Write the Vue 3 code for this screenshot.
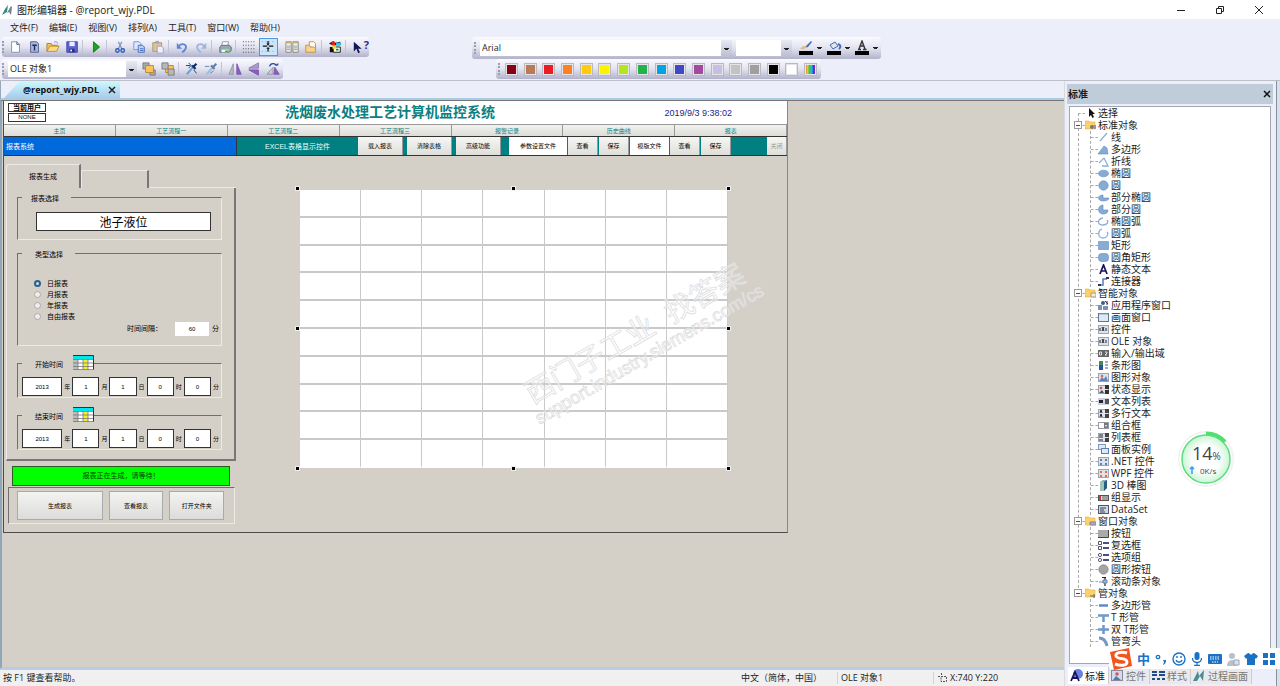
<script setup>
import { ref } from 'vue'

const g = {
  page: '<path d="M4 2h6l3 3v9H4z" fill="#fff" stroke="#7d8cb0"/><path d="M10 2v3h3" fill="none" stroke="#44507a"/>',
  text: '<path d="M4 2h7l2 2v10H4z" fill="#aab6dc" stroke="#4c5a86"/><path d="M6 6h5M8.5 6v6" stroke="#1d2b60" stroke-width="1.6"/>',
  open: '<path d="M1 13V4h5l1 2h6v2" fill="#f3c35e" stroke="#a97a20"/><path d="M1 13l3-6h11l-3 6z" fill="#fbd98a" stroke="#b88a2c"/><path d="M9 3c2-2 4-1 4 1" stroke="#6c86c8" fill="none"/>',
  save: '<path d="M2 2h12v12H2z" fill="#5d62d6" stroke="#3b3f9e"/><path d="M5 2h6v5H5z" fill="#e9edff"/><path d="M5 10h6v4H5z" fill="#2a2e78"/><path d="M6 11h2v2H6z" fill="#fff"/>',
  play: '<path d="M5 2l7 6-7 6z" fill="#1ba51f" stroke="#0d7a13"/>',
  cut: '<path d="M6 2l4 8M10 2L6 10" stroke="#7f93b8" stroke-width="1.4"/><circle cx="5" cy="12" r="2" fill="none" stroke="#2b58b4" stroke-width="1.5"/><circle cx="11" cy="12" r="2" fill="none" stroke="#2b58b4" stroke-width="1.5"/>',
  copy: '<path d="M2 2h6l2 2v7H2z" fill="#dfe8ff" stroke="#6d8fd0"/><path d="M7 6h5l2 2v6H7z" fill="#b8d0fa" stroke="#3d69b8"/><path d="M9 10h4M9 12h4" stroke="#3d69b8"/>',
  paste: '<path d="M2 3h10v10H2z" fill="#dcc593" stroke="#a8956a"/><path d="M5 1h4v3H5z" fill="#a8a8b0"/><path d="M7 7h5l2 2v6H7z" fill="#eef" stroke="#9aa0b8"/>',
  undo: '<path d="M4 7c5-5 10-1 8 3-1 2-2 3-4 4" fill="none" stroke="#5a86dc" stroke-width="2"/><path d="M2 3v7h6z" fill="#5a86dc"/>',
  redo: '<path d="M12 7c-5-5-10-1-8 3 1 2 2 3 4 4" fill="none" stroke="#9db4dc" stroke-width="2"/><path d="M14 3v7H8z" fill="#9db4dc"/>',
  print: '<path d="M5 2h7l-1 5H4z" fill="#fff" stroke="#8a93a0"/><path d="M2 8l2-2h9l2 2v4l-2 2H2z" fill="#9aa7b0" stroke="#5d6b74"/><path d="M4 11h8v3H4z" fill="#dfe"/><path d="M8 13h4" stroke="#2c2" stroke-width="2"/>',
  grid: '<path d="M1 2h15M1 6h15M1 10h15M1 14h15" stroke="#333" stroke-dasharray="1 2"/>',
  snap: '<path d="M1 2h15M1 13h15" stroke="#7b98b8" stroke-dasharray="1 3"/><path d="M8 1v5M8 9v4M2 7h5M9 7h5" stroke="#111" stroke-width="1.4"/><path d="M6 4h4l-2 2zM6 10h4L8 8z" fill="#111"/>',
  props: '<path d="M1 2h6v12H1zM9 2h6v12H9z" fill="#f8f4e4" stroke="#7f7f78"/><path d="M1 3h14" stroke="#c4b680" stroke-width="2"/><path d="M2 7h4M2 9h4M2 11h4M10 7h4M10 9h4M10 11h4" stroke="#8a98a8"/>',
  lib: '<path d="M2 14V6h4l1 2h6v6z" fill="#fbd489" stroke="#c08a3a"/><path d="M6 6V2h5l2 2v4" fill="#fff" stroke="#c08a3a"/>',
  dyn: '<path d="M1 4l5-3 2 2 6-1v4H5z" fill="#1a1a1a"/><path d="M4 2h4v4H4z" fill="#e02020"/><path d="M9 3h6v3H9z" fill="#28c8e8"/><path d="M2 8h4v6H2z" fill="#111"/><path d="M6 8h8v6H6z" fill="#ffe" stroke="#111"/><path d="M5 7h4v3H5z" fill="#f0e020"/><path d="M9 11h3" stroke="#1a8a30" stroke-width="2"/>',
  help: '<path d="M2 2v11l3-3 2 5 2-1-2-4h4z" fill="#14145a"/>',
  front: '<path d="M1 1h7v7H1z" fill="#aaa" stroke="#777"/><path d="M9 9h6v6H9z" fill="#aaa" stroke="#777"/><path d="M4 4h9v8H4z" fill="#fbc45a" stroke="#b8832a"/>',
  back: '<path d="M5 4h9v8H5z" fill="#fbc45a" stroke="#b8832a"/><path d="M1 1h7v7H1z" fill="#b8b8b8" stroke="#777"/><path d="M8 8h7v7H8z" fill="#b8b8b8" stroke="#777"/>',
  pick: '<path d="M2 14l7-8" stroke="#6aa8d8" stroke-width="2.4"/><path d="M8 4l4 4M9 6l4-4" stroke="#10306c" stroke-width="2.6"/><path d="M1 4h5M4 1l3 3-3 3M10 9l3 4" stroke="#10306c" fill="none"/>',
  pick2: '<path d="M3 14l7-8" stroke="#9cc0e0" stroke-width="2.4"/><path d="M8 4l4 4M10 6l4-4" stroke="#5f7da8" stroke-width="2.4"/><path d="M1 5h5M7 13l4-3" stroke="#5f7da8"/>',
  mirh: '<path d="M6 2v12H1z" fill="#b4b9c4" stroke="#8d94a4"/><path d="M10 2v12h5z" fill="#8a5cc0" stroke="#7a56b0"/>',
  mirv: '<path d="M13 1v6H2z" fill="#a9a0c8" stroke="#8779af"/><path d="M13 15V9H2z" fill="#8a5cc0" stroke="#7a56b0"/>',
  rot: '<path d="M1 14h7V6z" fill="#c4c9d4" stroke="#8d94a4"/><path d="M9 14h6L10 6z" fill="#8a5cc0" stroke="#7a56b0"/><path d="M4 5c1-4 6-4 8-1" fill="none" stroke="#2848a0" stroke-width="1.5"/><path d="M10 4h4V1z" fill="#2848a0"/>'
}
const bar1 = ['page', 'text', 'open', 'save', '|', 'play', '|', 'cut', 'copy', 'paste', '|', 'undo', 'redo', '|', 'print', '|', 'grid', 'snap', '-', 'props', 'lib', '|', 'dyn', '|', 'help']
const bar2 = ['front', 'back', '|', 'pick', 'pick2', '|', 'mirh', 'mirv', 'rot']
const names = { page: '新建', text: '模板', open: '打开', save: '保存', play: '运行', cut: '剪切', copy: '复制', paste: '粘贴', undo: '撤消', redo: '重做', print: '打印', grid: '网格', snap: '对齐网格', props: '属性', lib: '库', dyn: '动态向导', help: '帮助', front: '置前', back: '置后', pick: '复制属性', pick2: '分配属性', mirh: '水平镜像', mirv: '垂直镜像', rot: '旋转' }
const menus = ['文件(F)', '编辑(E)', '视图(V)', '排列(A)', '工具(T)', '窗口(W)', '帮助(H)']
const swatches = ['#880015', '#b97a57', '#ed1c24', '#ff7f27', '#ffc90e', '#fff200', '#b5e61d', '#22b14c', '#00a2e8', '#3f48cc', '#a349a4', '#c8bfe7', '#c3c3c3', '#9f9f9f', '#000000', '#ffffff']

const blue = 'fill="#86acd6" stroke="#5f8bbd" stroke-width=".6"'
const line = 'fill="none" stroke="#8fb0da" stroke-width="1.3"'
const small = (c) => `<rect x=".5" y="1.5" width="10" height="8" fill="#dde3ea" stroke="#9aa4b4"/>${c}`
const t = {
  line: `<path d="M2 9l7-8" ${line}/>`,
  poly: `<path d="M0 10l6-8 3 2 1 6z" ${blue}/>`,
  pline: `<path d="M1 7l5-5 4 8H4" ${line}/>`,
  ell: `<ellipse cx="5.5" cy="5.5" rx="5" ry="3.3" ${blue}/>`,
  circ: `<circle cx="5.5" cy="5.5" r="4.7" ${blue}/>`,
  pell: `<path d="M5 6V3C-1 3-1 9 5 9c3 0 6-1 6-3z" ${blue}/>`,
  pcirc: `<path d="M5 6V1C-1 1-1 10 5 10c3 0 5-1 5-4z" ${blue}/>`,
  aell: `<path d="M5 2C-1 3-1 9 5 9c4 0 6-3 4-5" ${line}/>`,
  acirc: `<path d="M4 1C-1 3 0 10 5 10c4 0 6-4 4-6" ${line}/>`,
  rect: `<path d="M.5 1.500h10v8H.5z" ${blue}/>`,
  rrect: `<rect x=".5" y="1.500" width="10" height="8" rx="3" ${blue}/>`,
  A: '<path d="M2 10l3.500-9L9 10M3.500 7h4" fill="none" stroke="#14145a" stroke-width="1.7"/>',
  conn: '<path d="M2 9h3V3h4" fill="none" stroke="#4f7fc0" stroke-width="1.500"/><path d="M0 8h3v2H0zM8 1h3v2H8z" fill="#335"/>',
  app: '<path d="M0 5h4v5H0zM5 6h5v4H5z" fill="#7b93b4"/><circle cx="5" cy="3" r="2" fill="#3b5f8e"/><path d="M7 1l3 3M9 1v4" stroke="#335"/>',
  win: '<rect x=".5" y="1.500" width="10" height="8" fill="#dfe9f3" stroke="#5f7890"/><path d="M1 2h9" stroke="#8aa8c8"/>',
  ctl: small('<path d="M2 4v3M4 3l2 4M6 3L4 7M8 4v3" stroke="#222"/>'),
  io: '<rect y="2" width="11" height="7" fill="#666"/><path d="M1.500 4h2v3h-2zM7 4h2v1L7 7h2" fill="none" stroke="#fff" stroke-width=".8"/>',
  bars: '<path d="M1 1h4v9H1z" fill="#3d8b57"/><path d="M1 5h4v5H1z" fill="#2d4f9a"/><path d="M7 2h3M7 5h3M7 8h3" stroke="#557"/>',
  gfx: small('<path d="M1 9l3-4 2 2 2-3 2 5z" fill="#5b86b8"/><circle cx="4" cy="4" r="1.300" fill="#e06050"/>'),
  state: small('<path d="M7 1h4v4H7zM7 6h4v4H7z" fill="#333"/><circle cx="3" cy="4" r="1.300" fill="#e05030"/><path d="M1 9l3-3 2 3z" fill="#456"/>'),
  tlist: '<rect y="2" width="11" height="7" fill="#ccd3dd"/><path d="M1 4h4v3H1z" fill="#223"/><path d="M7 3h4v5H7z" fill="#555"/>',
  mtext: small('<path d="M2 5l1-3 1 3M2 9l1-3 1 3" stroke="#222" fill="none"/><path d="M7 1h4v4H7zM7 6h4v4H7z" fill="#444"/>'),
  combo: '<rect x=".5" y="2.500" width="10" height="6" fill="#fff" stroke="#99a"/><path d="M6 3h4v5H6z" fill="#777"/><path d="M7 5h2l-1 2z" fill="#fff"/>',
  lbox: small('<path d="M1 3h4M1 5h4M1 8h4" stroke="#223"/><path d="M7 1h4v4H7zM7 6h4v4H7z" fill="#444"/>'),
  face: '<rect x=".5" y=".5" width="7" height="5" fill="#dfe9f6" stroke="#7a9cc4"/><rect x="3.500" y="4.500" width="7" height="5" fill="#dfe9f6" stroke="#5a80b0"/>',
  net: small('<path d="M2 3h2v2H2zM7 3h2v2H7zM2 7h2v2H2zM7 7h2v2H7z" fill="#5f7fb0"/>'),
  wpf: small('<path d="M2 3h2v2H2zM7 3h2v2H7zM2 7h2v2H2zM7 7h2v2H7z" fill="#e07040"/>'),
  cyl: '<path d="M2 2l3-2h4v8l-3 3H2z" fill="#88aacc"/><path d="M2 2h4v9H2z" fill="#9fc4b8"/><path d="M6 2l3-2v8l-3 3z" fill="#2c5c80"/>',
  grp: '<rect x=".5" y="3.500" width="10" height="5" fill="#eee" stroke="#555"/><path d="M1 4h2v4H1z" fill="#d33"/><path d="M5 4v4M7 4v4M9 4v4" stroke="#555"/>',
  data: '<rect x=".5" y="1.500" width="10" height="8" fill="#cdd8e2" stroke="#557"/><path d="M2 4h6M2 6h4M2 8h5" stroke="#345"/>',
  btn: '<path d="M0 2h10v7H0z" fill="#aaa"/><path d="M0 9.500h10.500V2" fill="none" stroke="#444"/>',
  chk: '<path d="M.5 1.500h3v3h-3zM.5 6.500h3v3h-3z" fill="#fff" stroke="#557"/><path d="M5 3h6M5 8h6" stroke="#14145a" stroke-width="1.500"/>',
  opt: '<circle cx="2" cy="3" r="1.600" fill="#fff" stroke="#557"/><circle cx="2" cy="8" r="1.600" fill="#fff" stroke="#557"/><path d="M5 3h6M5 8h6" stroke="#14145a" stroke-width="1.500"/>',
  rbtn: '<circle cx="5.500" cy="5.500" r="4.700" fill="#a4a4a4" stroke="#777" stroke-width=".6"/>',
  sld: '<path d="M7 1v9M4 1.500h4" stroke="#222" stroke-width="1.200"/><path d="M1 6h5M5 4h4v3H5z" stroke="#68a" fill="#9bc"/>',
  pipe: '<path d="M1 5.500h9" stroke="#5f8bc4" stroke-width="2.500"/>',
  tee: '<path d="M0 3.500h11M5.500 4v6" stroke="#7297c8" stroke-width="2.500"/>',
  cross: '<path d="M0 5.500h11M5.500 1v9" stroke="#7297c8" stroke-width="2.500"/>',
  elbow: '<path d="M1 2c4 0 7 3 8 8" fill="none" stroke="#7297c8" stroke-width="3"/>'
}
const groups = [
  { name: '标准对象', mark: '<circle cx="7" cy="7" r="2" fill="#777"/><path d="M8 5h3v4H9z" fill="#999"/>', kids: [['line', '线'], ['poly', '多边形'], ['pline', '折线'], ['ell', '椭圆'], ['circ', '圆'], ['pell', '部分椭圆'], ['pcirc', '部分圆'], ['aell', '椭圆弧'], ['acirc', '圆弧'], ['rect', '矩形'], ['rrect', '圆角矩形'], ['A', '静态文本'], ['conn', '连接器']] },
  { name: '智能对象', mark: '<path d="M6 5h5v4H6z" fill="#eee" stroke="#a98"/>', kids: [['app', '应用程序窗口'], ['win', '画面窗口'], ['ctl', '控件'], ['ctl', 'OLE 对象'], ['io', '输入/输出域'], ['bars', '条形图'], ['gfx', '图形对象'], ['state', '状态显示'], ['tlist', '文本列表'], ['mtext', '多行文本'], ['combo', '组合框'], ['lbox', '列表框'], ['face', '面板实例'], ['net', '.NET 控件'], ['wpf', 'WPF 控件'], ['cyl', '3D 棒图'], ['grp', '组显示'], ['data', 'DataSet']] },
  { name: '窗口对象', mark: '<path d="M5 6h6v3H5z" fill="#aab" stroke="#889"/>', kids: [['btn', '按钮'], ['chk', '复选框'], ['opt', '选项组'], ['rbtn', '圆形按钮'], ['sld', '滚动条对象']] },
  { name: '管对象', mark: '<path d="M5 8h5M9 6v4" stroke="#667"/>', kids: [['pipe', '多边形管'], ['tee', 'T 形管'], ['cross', '双 T形管'], ['elbow', '管弯头']] }
]
const folder = '<path d="M0 9V1h4l1 1h5v7z" fill="#fbd26a" stroke="#e0b04a" stroke-width=".6"/>'

const nav = ['主页', '工艺流程一', '工艺流程二', '工艺流程三', '报警记录', '历史曲线', '报表']
const kinds = ['日报表', '月报表', '年报表', '自由报表']
const kind = ref('日报表')
const periods = [
  { id: 'start', name: '开始时间' },
  { id: 'end', name: '结束时间' }
]
const parts = [['2013', '年'], ['1', '月'], ['1', '日'], ['0', '时'], ['0', '分']]
const handles = ['nw', 'n', 'ne', 'w', 'e', 'sw', 's', 'se']
const paneTabs = [
  ['标准', '<circle cx="8" cy="5" r="5" fill="#6b7fe0"/><path d="M1 12L5 3l4 9M2 9h5" fill="none" stroke="#14145a" stroke-width="1.800"/>'],
  ['控件', '<rect x=".5" y="1.500" width="11" height="10" fill="#cfdcf0" stroke="#889"/><circle cx="6" cy="5" r="1.800" fill="#d55"/><path d="M2 11l3-4 5 4z" fill="#57a"/>'],
  ['样式', '<path d="M0 3h5M7 3h6M0 6h5M7 6h6M0 10h3M5 10h3M10 10h3" stroke="#224a86" stroke-width="1.800"/>'],
  ['过程画面', '<path d="M0 12L5 2l1 5 5-6-1 11-3-5-3 5z" fill="#4a8a90"/>']
]
</script>

<template>
  <div class="app">
    <header class="title">
      <svg class="logo" viewBox="0 0 12 12"><path d="M1 11L4 5l3-4-1 7z" fill="#2f8a8a" /><path d="M6 9l4-7 1 1-1 8-2-3z" fill="#73828c" /></svg>
      <h1>图形编辑器 - @report_wjy.PDL</h1>
      <div class="winbtns">
        <button aria-label="最小化"><svg viewBox="0 0 10 10"><path d="M1 5.500h8" /></svg></button>
        <button aria-label="还原"><svg viewBox="0 0 10 10"><path d="M1.500 3.500h5v5h-5zM3.500 3V1.500h5v5H7" /></svg></button>
        <button aria-label="关闭"><svg viewBox="0 0 10 10"><path d="M1 1l8 8M9 1L1 9" /></svg></button>
      </div>
    </header>
    <nav class="menu"><button v-for="m in menus" :key="m">{{ m }}</button></nav>

    <div class="bars">
      <div class="left-bars">
        <div class="bar">
          <i class="grip"></i>
          <template v-for="(b, i) in bar1" :key="i">
            <i v-if="b === '|' || b === '-'" class="sep" :class="{ blank: b === '-' }"></i>
            <button v-else class="tool" :class="{ on: b === 'snap' }" :aria-label="names[b]">
              <svg viewBox="0 0 17 16" v-html="g[b]"></svg><b v-if="b === 'help'" class="q">?</b>
            </button>
          </template>
        </div>
        <div class="bar">
          <i class="grip"></i>
          <select class="objects" aria-label="对象"><option>OLE 对象1</option></select>
          <template v-for="(b, i) in bar2" :key="i">
            <i v-if="b === '|'" class="sep"></i>
            <button v-else class="tool" :aria-label="names[b]"><svg viewBox="0 0 17 16" v-html="g[b]"></svg></button>
          </template>
        </div>
      </div>
      <div class="right-bars">
        <div class="bar fontbar">
          <i class="grip"></i>
          <select class="font" aria-label="字体"><option>Arial</option></select>
          <select class="size" aria-label="字号"><option></option></select>
          <button class="ink" aria-label="线条颜色"><svg viewBox="0 0 16 16"><path d="M3 9l7-2 4-5-1-1-5 5z" fill="#3f6cc0" /><path d="M2 9c2-3 4-3 6-3l1 2z" fill="#f0b860" /><path d="M1 11h14v4H1z" /></svg></button>
          <button class="ink" aria-label="填充颜色"><svg viewBox="0 0 16 16"><path d="M4 5l5-3 3 4-5 3z" fill="#dce6f6" stroke="#456aa8" /><path d="M12 4c3 1 3 3 1 5" fill="none" stroke="#3f6cc0" stroke-width="2" /><path d="M1 11h14v4H1z" /></svg></button>
          <button class="ink" aria-label="字体颜色"><svg viewBox="0 0 16 16"><path d="M4 9.500h3M9 9.500h3.500M5 9l3-8 3 8M6 6h4" fill="none" stroke="#333" stroke-width="1.400" /><path d="M1 11h14v4H1z" /></svg></button>
        </div>
        <div class="bar palette">
          <i class="grip"></i>
          <div class="swatches">
            <button v-for="c in swatches" :key="c" :aria-label="c" :style="{ background: c }"></button>
            <button class="rainbow" aria-label="其他颜色"></button>
          </div>
        </div>
      </div>
    </div>

    <div class="main">
      <div class="editor">
        <div class="tabs">
          <div class="doctab"><span>@report_wjy.PDL</span>
            <button aria-label="关闭文档"><svg viewBox="0 0 8 8"><path d="M1 1l6 6M7 1L1 7" stroke="#222" stroke-width="1.500" /></svg></button>
          </div>
        </div>
        <main class="work">
          <section class="page">
            <header class="phead">
              <div class="user"><span>当前用户</span><span>NONE</span></div>
              <h2>洗烟废水处理工艺计算机监控系统</h2>
              <time>2019/9/3 9:38:02</time>
            </header>
            <nav class="pnav"><button v-for="n in nav" :key="n">{{ n }}</button></nav>
            <div class="strip">
              <div class="sys">报表系统</div>
              <div class="excel">EXCEL表格显示控件</div>
              <div class="acts">
                <button>载入报表</button><button>清除表格</button><button>高级功能</button>
              </div>
              <div class="files">
                <span class="wide">参数设置文件</span><button>查看</button><button>保存</button>
                <span>模版文件</span><button>查看</button><button>保存</button>
              </div>
              <button class="off">关闭</button>
            </div>

            <div class="pbody">
              <form class="side" @submit.prevent>
                <div class="cardtabs"><button>报表生成</button><button aria-label="空白页"></button><i></i></div>
                <div class="card">
                  <fieldset class="pick">
                    <legend>报表选择</legend>
                    <input aria-label="报表选择" value="池子液位" />
                  </fieldset>
                  <fieldset class="kind">
                    <legend>类型选择</legend>
                    <label v-for="k in kinds" :key="k"><input v-model="kind" type="radio" name="kind" :value="k" />{{ k }}</label>
                    <div class="every"><label for="every">时间间隔：</label><input id="every" value="60" /><span>分</span></div>
                  </fieldset>
                  <fieldset v-for="p in periods" :key="p.id" class="when">
                    <legend>{{ p.name }}
                      <svg viewBox="0 0 21 15"><rect width="21" height="15" fill="#fff" /><path d="M0 4h5v11H0z" fill="#bbb" /><path d="M10 5h5v10h-5z" fill="#f2ee30" /><path d="M0 1h20v3H0z" fill="#00e4ec" /><path d="M0 .5h20.500v14H0M0 4.500h20M0 8h20M0 11.500h20M5 4v11M10 4v11M15 4v11" fill="none" stroke="#777" stroke-width=".8" /><path d="M0 .5h20.500v14" fill="none" stroke="#333" /></svg>
                    </legend>
                    <div class="date">
                      <template v-for="(d, i) in parts" :key="i"><input :id="p.id + i" :value="d[0]" /><label :for="p.id + i">{{ d[1] }}</label></template>
                    </div>
                  </fieldset>
                </div>
                <p class="wait">报表正在生成，请等待！</p>
                <div class="cmds"><button>生成报表</button><button>查看报表</button><button>打开文件夹</button></div>
              </form>
              <div class="sheet">
                <table aria-label="报表"><tbody><tr v-for="r in 10" :key="r"><td v-for="c in 7" :key="c"></td></tr></tbody></table>
                <i v-for="h in handles" :key="h" class="handle" :class="h"></i>
                <svg class="mark" viewBox="0 0 280 190">
                  <g transform="translate(46 151) rotate(-30)"><text x="-14" y="-11" font-size="29">西门子工业&#160;&#160;找答案</text><text x="-18" y="10" font-size="18">support.industry.siemens.com/cs</text></g>
                </svg>
              </div>
            </div>
          </section>
        </main>
        <footer class="status">
          <span class="hint">按 F1 键查看帮助。</span><span class="lang">中文（简体，中国）</span><span class="obj">OLE 对象1</span>
          <span class="pos"><svg viewBox="0 0 10 10"><path d="M3 3.500h5.500v5H3zM0 3.500h3M3.500 0v3" fill="none" stroke="#555" stroke-dasharray="2 1" /></svg>X:740 Y:220</span>
        </footer>
      </div>

      <aside class="pane">
        <header><h3>标准</h3><button aria-label="关闭面板"><svg viewBox="0 0 8 8"><path d="M1 1l6 6M7 1L1 7" stroke="#111" stroke-width="1.500" /></svg></button></header>
        <div class="treebox">
          <ul class="tree">
            <li><div class="row"><svg viewBox="0 0 11 11"><path d="M4 0v9l2-2 1.500 3 1.500-1-1.500-3H10z" fill="#111" /></svg>选择</div></li>
            <li v-for="n in groups" :key="n.name">
              <div class="row"><button class="box" :aria-label="'折叠' + n.name"></button><svg viewBox="0 0 11 11" v-html="folder + n.mark"></svg>{{ n.name }}</div>
              <ul><li v-for="k in n.kids" :key="k[1]" class="row"><svg viewBox="0 0 11 11" v-html="t[k[0]]"></svg>{{ k[1] }}</li></ul>
            </li>
          </ul>
        </div>
        <div class="panetabs">
          <button v-for="(p, i) in paneTabs" :key="p[0]" :class="{ cur: i === 0 }"><svg viewBox="0 0 13 13" v-html="p[1]"></svg>{{ p[0] }}</button>
        </div>
      </aside>
    </div>

    <div class="gauge">
      <svg viewBox="0 0 58 58"><defs><radialGradient id="glow"><stop offset=".55" stop-color="#fff" /><stop offset="1" stop-color="#c9f5d4" /></radialGradient></defs>
        <circle cx="29" cy="29" r="28" fill="#e4e4e4" opacity=".5" /><circle cx="29" cy="29" r="26.500" fill="#fff" />
        <circle cx="29" cy="29" r="24" fill="url(#glow)" stroke="#5fdc80" stroke-width="1.500" />
        <path d="M29 3.500A25.500 25.500 0 0 1 48 12" fill="none" stroke="#4fe070" stroke-width="4" />
        <path d="M15 37v7M13 39l2-2 2 2" fill="none" stroke="#3a9bf0" stroke-width="1.500" />
      </svg>
      <span class="pct">14<small>%</small></span><span class="rate">0K/s</span>
    </div>

    <div class="ime">
      <svg class="sogou" viewBox="0 0 24 22"><path d="M1 4L20 0l3 18-18 4z" fill="#f2541b" /><path d="M18 5C12 3 6 5 7 8c1 4 11 1 11 6 0 4-7 4-12 2" fill="none" stroke="#fff" stroke-width="3" /></svg>
      <b>中</b>
      <svg viewBox="0 0 14 14"><circle cx="4" cy="5" r="1.700" fill="none" stroke="#1b72c4" stroke-width="1.300" /><path d="M9 8h3c0 3-1 4-3 5l1-3z" fill="#1b72c4" /></svg>
      <svg viewBox="0 0 14 14"><circle cx="7" cy="7" r="6" fill="none" stroke="#1b72c4" stroke-width="1.400" /><path d="M4 8c1 3 5 3 6 0M5 4v2M9 4v2" fill="none" stroke="#1b72c4" stroke-width="1.400" /></svg>
      <svg viewBox="0 0 14 14"><rect x="4.500" y="0" width="5" height="8" rx="2.500" fill="#1b72c4" /><path d="M2.500 6c0 6 9 6 9 0M7 10v3M4 13.500h6" fill="none" stroke="#1b72c4" stroke-width="1.300" /></svg>
      <svg viewBox="0 0 14 14"><rect y="2" width="14" height="10" rx="1" fill="#1b72c4" /><path d="M2 5h10M2 7h10M4 10h6" stroke="#fff" stroke-dasharray="1.500 1" /></svg>
      <svg viewBox="0 0 14 14"><circle cx="6" cy="4" r="3" fill="#b8c0cc" /><path d="M1 14c0-8 10-8 10 0z" fill="#b8c0cc" /><path d="M8 8h5v5H8z" fill="#dde2ea" stroke="#9aa6b4" /></svg>
      <svg viewBox="0 0 14 14"><path d="M4 1h1c1 2 3 2 4 0h1l4 3-2 3-1-1v7H3V6L2 7 0 4z" fill="#1b72c4" /></svg>
      <svg viewBox="0 0 14 14"><path d="M1 1h5v5H1zM8 1h5v5H8zM1 8h5v5H1zM8 8h5v5H8z" fill="#1b72c4" /></svg>
    </div>
  </div>
</template>

<style>
html, body { margin: 0; background: #eceffa; }
</style>
<style scoped>
.app { min-height: 100vh; display: flex; flex-direction: column; position: relative; overflow: hidden; font: 9px/12px "Open Sans", "Noto Sans CJK SC", sans-serif; color: #1c1c1c; background: #eceffa; }
.app * { box-sizing: border-box; }
button, input, select { font: inherit; color: inherit; border: 0; margin: 0; padding: 0; background: none; border-radius: 0; outline: 0; }
select { appearance: none; }
h1, h2, h3, p, ul { margin: 0; padding: 0; font-size: inherit; font-weight: inherit; list-style: none; }
svg { display: block; flex: none; }
input { min-width: 0; }

.title { height: 19px; display: flex; align-items: center; gap: 4px; padding-left: 1px; background: #fff; }
.title h1 { flex: 1; font-size: 10px; color: #222; }
.logo { width: 12px; height: 12px; }
.winbtns { display: flex; padding-right: 2px; }
.winbtns button { width: 39px; height: 19px; display: grid; place-items: center; }
.winbtns svg { width: 10px; height: 10px; fill: none; stroke: #222; }
.menu { height: 18px; display: flex; gap: 11px; padding-left: 10px; align-items: center; }
.menu button { white-space: nowrap; }

.bars { display: flex; height: 44px; border-bottom: 1px solid #bcbec8; }
.left-bars { width: 470px; padding-left: 2px; }
.bar { width: fit-content; height: 20px; display: flex; align-items: center; border-radius: 3px; background: linear-gradient(#fafaff, #e2e3ef 50%, #b2b3cb); }
.left-bars .bar { margin-bottom: 2px; }
.grip { width: 4px; height: 12px; border-left: 2px dotted #9a9cb2; }
.tool { width: 19px; height: 18px; display: flex; align-items: center; justify-content: center; position: relative; }
.tool svg { width: 15px; height: 14px; }
.tool.on { background: #cbe6fb; border: 1px solid #4a9be0; }
.q { position: absolute; right: 0; top: 1px; color: #22309c; font-size: 11px; }
.sep { width: 5px; height: 14px; border-left: 1px solid #c2c3d6; }
.sep.blank { border: 0; }
.objects, .font, .size { height: 16px; padding: 0 2px; background: linear-gradient(#222, #222) calc(100% - 3px) 8px / 5px 1px no-repeat, linear-gradient(#222, #222) calc(100% - 4px) 9px / 3px 1px no-repeat, linear-gradient(#e8e9f3, #bdbed3) 100% 0 / 11px 100% no-repeat, #fff; }
.objects { width: 129px; margin: 0 3px 0 2px; }
.right-bars { padding-left: 2px; }
.fontbar { height: 22px; padding-left: 2px; }
.font { width: 252px; margin: 0 4px 0 2px; }
.size { width: 56px; margin-right: 5px; }
.ink { width: 28px; height: 18px; padding-left: 1px; background: linear-gradient(#222, #222) 20px 8px / 5px 1px no-repeat, linear-gradient(#222, #222) 21px 9px / 3px 1px no-repeat; }
.ink svg { width: 16px; height: 16px; }
.palette { margin: 0 0 0 24px; width: 325px; padding-left: 2px; }
.swatches { flex: 1; display: flex; justify-content: space-between; padding: 0 4px 0 3px; }
.swatches button { width: 13px; height: 13px; border: 1px solid #b9b9c2; box-shadow: inset 0 0 0 1px #e5e5e5; }
.swatches .rainbow { background: linear-gradient(90deg, #e33, #ec3, #3c4, #2bd, #33d, #c3c); }

.main { flex: 1; display: flex; }
.editor { flex: 1; min-width: 0; display: flex; flex-direction: column; }
.tabs { height: 19px; padding-left: 3px; border-bottom: 2px solid #a9cbe4; border-left: 1px solid #93a9ba; display: flex; }
.doctab { height: 17px; display: flex; align-items: center; gap: 9px; padding: 1px 4px 0 19px; font-weight: 700; color: #111; background: linear-gradient(#cdf9fd, #a8cbec); clip-path: polygon(16px 0, 100% 0, 100% 100%, 0 100%); }
.doctab button, .pane header button { width: 8px; height: 8px; }
.work { flex: 1; background: #d4d0c8; border: solid #8ea7bb; border-width: 1px 0 0 2px; border-top-color: #777; border-bottom: 2px solid #b4cde2; padding-left: 1px; }
.page { width: 74%; min-height: 430px; display: flex; flex-direction: column; border: 1px solid #4c4c4c; border-top: 0; border-right-color: #888; font-size: 6px; line-height: 8px; color: #000; font-family: "Liberation Sans", "Noto Sans CJK SC", sans-serif; }
.phead { height: 23px; background: #fff; display: grid; grid-template-columns: 1fr auto 1fr; align-items: center; padding: 0 15px 0 4px; }
.phead h2 { color: #0b8080; font: 700 14px/18px "Liberation Serif", "Noto Sans CJK SC", serif; }
.phead time { justify-self: end; margin-right: 40px; color: #1c1c8c; font-size: 9px; }
.user { width: 38px; display: grid; gap: 1px; text-align: center; }
.user span { border: 1px solid #333; height: 9px; line-height: 7px; }
.user span:first-child { font-weight: 700; font-size: 7px; }
.pnav { height: 12px; display: flex; color: #128080; }
.pnav button { flex: 1; border: 1px solid #999; border-width: 1px 1px 0 0; background: linear-gradient(#f2f2ef, #dcdcd8); }
.strip { height: 20px; display: flex; background: #008080; border: 1px solid #333; border-width: 1px 0; }
.sys { width: 233px; background: #006adc; color: #fff; line-height: 19px; font-size: 7px; padding-left: 2px; border-right: 1px solid #334; }
.excel { width: 121px; color: #e8ffff; text-align: center; line-height: 19px; font-size: 7px; }
.acts, .files { display: flex; gap: 4px; }
.acts button { width: 45px; }
.files { flex: 1; gap: 1px; padding-left: 8px; }
.strip button { background: linear-gradient(#f6f6f4, #dededb); border: solid #999; border-width: 0 1px 0 0; }
.files button { width: 30px; }
.files span { width: 39px; background: #fff; text-align: center; line-height: 18px; white-space: nowrap; }
.files .wide { width: 58px; }
.strip .off { width: 20px; color: #999; }

.pbody { display: flex; }
.side { width: 232px; padding: 8px 0 0 2px; }
.cardtabs { display: flex; align-items: flex-end; }
.cardtabs button { border: solid #eceae4; border-width: 1px 2px 0 1px; border-right-color: #777; }
.cardtabs button:first-child { width: 75px; height: 24px; border-radius: 3px 0 0; font-size: 7px; }
.cardtabs button:nth-child(2) { width: 68px; height: 18px; }
.cardtabs i { flex: 1; height: 1px; background: #eceae4; }
.card { height: 273px; padding: 1px 12px 0 10px; border: solid #777; border-width: 0 2px 2px 1px; border-left-color: #eceae4; }
fieldset { margin: 0; min-width: 0; padding: 0; border: 1px solid; border-color: #6f6f6f #eceae4 #eceae4 #6f6f6f; }
legend { margin-left: 4px; padding: 0 12px 0 9px; height: 16px; line-height: 20px; font-size: 7px; display: flex; }
.pick { height: 51px; }
.pick input { display: block; width: 175px; height: 19px; margin: 7px 0 0 18px; border: 1px solid #333; background: #fff; text-align: center; font-size: 12px; }
.kind { height: 101px; margin-top: 5px; }
.kind legend, .when legend { padding-left: 13px; }
.kind > label { display: flex; align-items: center; gap: 6px; height: 11px; margin-left: 16px; font-size: 7px; }
.kind legend + label { margin-top: 17px; }
.kind input[type=radio] { appearance: none; width: 7px; height: 7px; border-radius: 50%; border: 1px solid #aaa; background: #eee; }
.kind input:checked { border: 2px solid #2f5f86; background: #bfe4f4; }
.every { display: flex; align-items: center; margin-left: 109px; font-size: 7px; }
.every label { width: 48px; white-space: nowrap; }
.every input { width: 34px; height: 14px; margin-right: 3px; background: #fff; text-align: center; font-size: 6px; }
.when { height: 43px; margin-top: 9px; }
.when legend { padding-right: 0; gap: 10px; }
.when legend svg { width: 21px; height: 15px; }
.date { display: flex; align-items: center; padding: 6px 0 0 4px; }
.date input { flex: 27 1 0; height: 19px; border: 1px solid #333; background: #fff; text-align: center; }
.date input:first-child { flex-grow: 41; }
.date label { width: 10px; text-align: center; }
.wait { height: 20px; margin: 5px 6px 0; border: 1px solid #2c5c1c; background: #0f0; text-align: center; line-height: 18px; font-size: 7px; color: #063c06; }
.cmds { display: flex; gap: 6px; height: 37px; margin: 1px 1px 8px 2px; padding: 3px 10px 3px 8px; border: 1px solid; border-color: #6f6f6f #eceae4 #eceae4 #6f6f6f; }
.cmds button { flex: 54 1 0; border: 1px solid #aaa; background: linear-gradient(#f3f3f1, #dcdcda); }
.cmds button:first-child { flex-grow: 86; }

.sheet { flex: 1; position: relative; height: 278px; margin: 34px 59px 0 64px; }
table { width: 100%; height: 100%; table-layout: fixed; border-collapse: separate; border-spacing: 0; background: #fff; }
tr { height: 10%; }
td { padding: 0; border: solid #c9c9c9; border-width: 0 1px 2px 0; }
tr:last-child td { border-bottom-color: #fff; }
.handle { position: absolute; width: 3px; height: 3px; background: #000; outline: 1px solid #eee; }
.nw, .n, .ne { top: -3px; } .w, .e { top: calc(50% - 2px); } .sw, .s, .se { bottom: -2px; }
.nw, .w, .sw { left: -4px; } .n, .s { left: calc(50% - 2px); } .ne, .e, .se { right: -2px; }
.mark { position: absolute; left: 204px; top: 66px; width: 280px; height: 190px; overflow: visible; pointer-events: none; }
.mark text { fill: #fff; fill-opacity: .4; stroke: #dedede; stroke-width: .8; font-family: "Liberation Sans", "Noto Sans CJK SC", sans-serif; }

.status { height: 17px; display: flex; align-items: center; background: #f0f0f0; border-top: 1px solid #c8ccd2; }
.hint { flex: 1; padding-left: 3px; }
.lang { width: 96px; }
.obj { width: 96px; padding-left: 3px; border-left: 1px solid #d4d4d4; }
.pos { width: 131px; padding-left: 4px; border-left: 1px solid #d4d4d4; display: flex; align-items: center; gap: 2px; }
.pos svg { width: 10px; height: 10px; }

.pane { width: 216px; display: flex; flex-direction: column; padding: 3px 4px 2px 3px; border-right: 3px solid #d3e2f1; box-shadow: inset -1px 0 #8c9099, inset 1px 0 #d8dae2; font-size: 10px; }
.pane header { height: 20px; display: flex; align-items: center; justify-content: space-between; padding: 0 2px 0 1px; background: #bfcddb; }
.pane h3 { font-weight: 700; }
.treebox { flex: 1; margin: 2px 2px 0; padding: 0 0 15px 8px; background: #fff; border: 1px solid #a2a6b0; }
.tree { position: relative; }
.tree::before { content: ""; position: absolute; left: 0; top: 6px; bottom: 54px; border-left: 1px dashed #aaa; }
.row { height: 12px; line-height: 12px; display: flex; align-items: center; gap: 2px; padding-left: 7px; position: relative; white-space: nowrap; }
.row::before { content: ""; position: absolute; left: 0; width: 7px; top: 6px; border-top: 1px dashed #aaa; }
.row svg { width: 11px; height: 11px; }
.tree ul { margin-left: 12px; border-left: 1px dashed #aaa; }
.box { position: absolute; left: -4px; top: 2px; width: 8px; height: 8px; border: 1px solid #999; background: linear-gradient(#3a4a90, #3a4a90) 1px 3px / 4px 1px no-repeat, #fff; }
.panetabs { display: flex; height: 17px; margin-top: 3px; padding-left: 1px; color: #777; }
.panetabs button { display: flex; align-items: center; gap: 2px; padding: 0 3px 0 2px; background: #e9e9ee; border-right: 1px solid #ccc; white-space: nowrap; }
.panetabs .cur { background: #fff; color: #111; }
.panetabs svg { width: 13px; height: 13px; }

.gauge { position: absolute; right: 45px; bottom: 198px; width: 58px; height: 58px; color: #444; }
.gauge svg { width: 58px; height: 58px; }
.pct { position: absolute; left: 15px; top: 13px; font-size: 18px; line-height: 20px; display: flex; align-items: baseline; }
.pct small { font-size: 10px; }
.rate { position: absolute; left: 23px; top: 35px; font-size: 8px; }
.ime { position: absolute; right: 0; bottom: 17px; height: 21px; width: 171px; padding: 0 4px 0 0; display: flex; align-items: center; justify-content: space-between; background: #fff; color: #1b72c4; border-radius: 3px 0 0 3px; }
.ime b { font-size: 13px; }
.ime svg { width: 14px; height: 14px; }
.ime .sogou { width: 24px; height: 22px; }
</style>
